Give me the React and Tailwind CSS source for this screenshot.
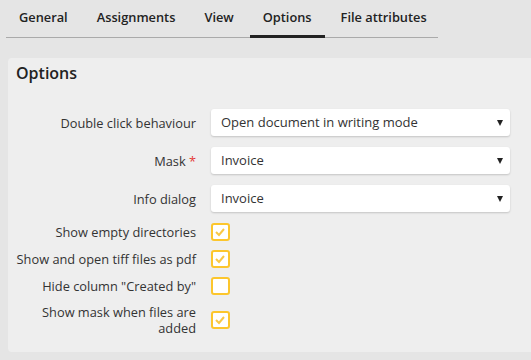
import React from "react";

const tabs = ["General", "Assignments", "View", "Options", "File attributes"];

function Select({ value }) {
  return (
    <div className="w-[299px] h-[27px] bg-white rounded-[3px] shadow-[0_1px_2px_rgba(0,0,0,0.18)] flex items-center pl-[10px] pr-[7px] text-[13px] text-[#333]">
      <span className="flex-1">{value}</span>
      <svg width="6" height="6" viewBox="0 0 6 6" className="mt-[1px]">
        <polygon points="0,0 6,0 3,6" fill="#222" />
      </svg>
    </div>
  );
}

function Checkbox({ checked }) {
  return (
    <div className="w-[19px] h-[18px] rounded-[3px] border-2 border-[#fcc62d] bg-white flex items-center justify-center">
      {checked && (
        <svg width="15" height="14" viewBox="0 0 15 14" className="-mt-[1px]">
          <polyline points="3,7 6,10 11,4" fill="none" stroke="#f9c846" strokeWidth="2" />
        </svg>
      )}
    </div>
  );
}

function Row({ label, children, required, className = "" }) {
  return (
    <div className={"flex items-center " + className}>
      <div className="w-[188px] text-right text-[12.8px] leading-[16px] text-[#333]">
        {label}
        {required && <span className="text-[#e53935]"> *</span>}
      </div>
      <div className="ml-[15px]">{children}</div>
    </div>
  );
}

export default function App() {
  return (
    <div
      className="w-[531px] h-[360px] bg-[#e5e5e5] overflow-hidden"
      style={{ fontFamily: '"Open Sans", sans-serif' }}
    >
      <div className="ml-[6px] w-[432px] h-[38px] border-b border-[#aaaaaa] flex gap-[3px]">
        {tabs.map((t) => (
          <div
            key={t}
            className={
              "shrink-0 whitespace-nowrap h-[38px] px-[13px] flex items-start pt-[8px] text-[12.8px] font-semibold text-[#222] " +
              (t === "Options" ? "border-b-[3px] border-[#222]" : "")
            }
          >
            {t}
          </div>
        ))}
      </div>
      <div className="ml-[8px] mt-[20px] h-[294px] bg-[#eeeeee] rounded-l-[4px] pt-[4px] pr-[8px]">
        <div className="pl-[8px] text-[16px] leading-[22px] font-semibold text-[#222]">Options</div>
        <div className="mt-[25px] flex flex-col">
          <Row label="Double click behaviour">
            <Select value="Open document in writing mode" />
          </Row>
          <Row label="Mask" required className="mt-[11px]">
            <Select value="Invoice" />
          </Row>
          <Row label="Info dialog" className="mt-[11px]">
            <Select value="Invoice" />
          </Row>
          <Row label="Show empty directories" className="mt-[11px]">
            <Checkbox checked />
          </Row>
          <Row label="Show and open tiff files as pdf" className="mt-[9px]">
            <Checkbox checked />
          </Row>
          <Row label={'Hide column "Created by"'} className="mt-[9px]">
            <Checkbox />
          </Row>
          <Row label="Show mask when files are added" className="mt-[9px]">
            <Checkbox checked />
          </Row>
        </div>
      </div>
    </div>
  );
}
